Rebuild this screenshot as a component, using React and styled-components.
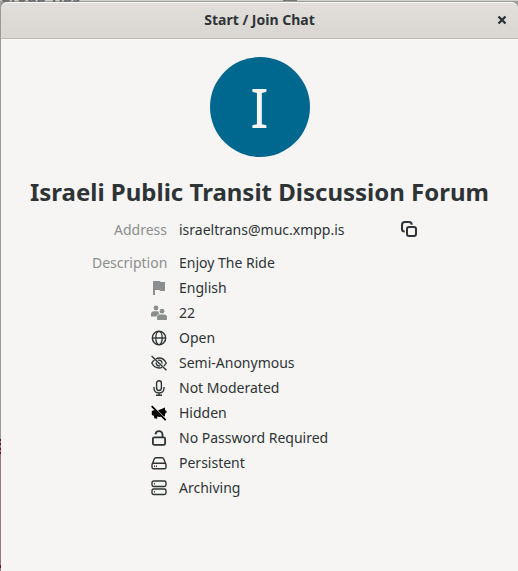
import React from "react"
import styled, { createGlobalStyle } from "styled-components"

const theme = {
  text: "#2e3436",
  dim: "#8b8e8f",
  background: "#f6f5f3",
  accent: "#00678f",
  font: '"Noto Sans", "Open Sans", sans-serif',
}

const DETAILS = [
  { name: "Language", icon: <FlagIcon />, value: "English", dim: true },
  { name: "Users", icon: <UsersIcon />, value: "22", dim: true },
  { name: "Access", icon: <GlobeIcon />, value: "Open" },
  { name: "Anonymity", icon: <EyeOffIcon />, value: "Semi-Anonymous" },
  { name: "Moderation", icon: <MicIcon />, value: "Not Moderated" },
  { name: "Visibility", icon: <HiddenIcon />, value: "Hidden" },
  { name: "Password", icon: <LockIcon />, value: "No Password Required" },
  { name: "Persistence", icon: <DriveIcon />, value: "Persistent" },
  { name: "History", icon: <ServerIcon />, value: "Archiving" },
]

export default function App() {
  return (
    <>
      <GlobalStyle />
      <Desktop>
        <BackWindow aria-hidden="true">
          <BackTitle>Group Tips</BackTitle>
          <BackMenu />
        </BackWindow>
        <Dialog role="dialog" aria-labelledby="dialog-title">
          <TitleBar>
            <DialogTitle id="dialog-title">Start / Join Chat</DialogTitle>
            <CloseButton type="button" aria-label="Close">
              <CloseIcon />
            </CloseButton>
          </TitleBar>
          <Content>
            <Avatar>I</Avatar>
            <RoomName>Israeli Public Transit Discussion Forum</RoomName>
            <Details>
              <AddressRow>
                <Label>Address</Label>
                <Value>israeltrans@muc.xmpp.is</Value>
                <Action>
                  <CopyButton type="button" aria-label="Copy address">
                    <CopyIcon />
                  </CopyButton>
                </Action>
              </AddressRow>
              <Row>
                <Label>Description</Label>
                <Value>Enjoy The Ride</Value>
              </Row>
              {DETAILS.map(({ name, icon, value, dim }) => (
                <Row key={name}>
                  <IconLabel $dim={dim} aria-label={name}>
                    {icon}
                  </IconLabel>
                  <Value>{value}</Value>
                </Row>
              ))}
            </Details>
          </Content>
        </Dialog>
      </Desktop>
    </>
  )
}

function Icon({ children }) {
  return (
    <svg
      width="16"
      height="16"
      viewBox="0 0 16 16"
      fill="none"
      stroke="currentColor"
      strokeWidth="1.4"
      aria-hidden="true"
    >
      {children}
    </svg>
  )
}

function CloseIcon() {
  return (
    <Icon>
      <path d="M4.500 4.500 11.500 11.500M11.500 4.500 4.500 11.500" strokeWidth="2.400" />
    </Icon>
  )
}

function CopyIcon() {
  return (
    <Icon>
      <g strokeWidth="2">
        <path d="M3.700 10.600C2 10.600 1 9.800 1 8V4c0-2 1-3 3-3h4c1.800 0 2.700 1 2.700 2.700" />
        <rect x="6" y="6" width="9" height="9" rx="2" />
      </g>
    </Icon>
  )
}

function FlagIcon() {
  return (
    <Icon>
      <path
        d="M2 1h6.500c.8 0 .7 1 1.500 1h4v9H9.500c-.9 0-.7-1-1.500-1H4v5H2z"
        fill="currentColor"
        stroke="none"
      />
    </Icon>
  )
}

function UsersIcon() {
  return (
    <Icon>
      <g fill="currentColor" stroke="none">
        <circle cx="5" cy="3" r="2.400" />
        <path d="M3 6.300h4.200c.2 1.300.7 2.200 1.500 2.700C7 9.300 6 10 5.500 11.500H0V9.300c0-2 1-3 3-3z" />
        <circle cx="11" cy="6.200" r="2.400" />
        <path d="M9 9.600h4c2 0 3 1.200 3 3v1.700c0 .5-.3.700-.7.700H6.700c-.4 0-.7-.2-.7-.7v-1.700c0-1.800 1-3 3-3z" />
      </g>
    </Icon>
  )
}

function GlobeIcon() {
  return (
    <Icon>
      <circle cx="8" cy="8" r="6.700" />
      <ellipse cx="8" cy="8" rx="3.200" ry="6.700" strokeWidth="1.300" />
      <path d="M1.200 8h13.600" />
    </Icon>
  )
}

function EyeOffIcon() {
  return (
    <Icon>
      <path d="M5 3.900C6 3.300 7 3 8.200 3c3 0 5.500 2 7 5-.6 1.200-1.400 2.200-2.400 3M3.500 5C2.300 5.900 1.400 6.900.8 8c1.500 3 4.200 5 7.400 5 1 0 2-.2 2.900-.6" />
      <path d="M7.200 5.200c2-.5 4.100 1 3.800 3.500M5.300 7.300c-.5 2 1 3.900 3.600 3.600" />
      <path d="M.6.9 15.400 15.300" />
    </Icon>
  )
}

function MicIcon() {
  return (
    <Icon>
      <rect x="5.600" y=".8" width="4.800" height="9.700" rx="2.400" />
      <path d="M3 7v1c0 3 2 5 5 5s5-2 5-5V7M8 13v2.200M5 15.200h6" />
    </Icon>
  )
}

function HiddenIcon() {
  return (
    <Icon>
      <g color="#000000">
        <path
          d="M.8 6 3.500 5l6.800 6.800L8 12l-1.500-.8-.5 2.600-2.700-.6-.5-2.500L.8 10zM7 5.600 14 2.400v9.200l-1.500-.5z"
          fill="currentColor"
          stroke="none"
        />
        <path d="M14.300 5.700c.8.500.8 2 0 2.500" />
        <path d="M.7 1.200 14.700 15.200" strokeWidth="1.800" />
      </g>
    </Icon>
  )
}

function LockIcon() {
  return (
    <Icon>
      <g strokeWidth="1.800">
        <rect x="1.900" y="7.300" width="12.200" height="7.600" rx="1.500" />
        <path d="M11.500 7.300V4.600c0-2-1.500-3.400-3.500-3.400-1.900 0-3.300 1.100-3.500 3.200" />
      </g>
    </Icon>
  )
}

function DriveIcon() {
  return (
    <Icon>
      <path d="M1.400 8.700 3.300 3.800c.3-.7.800-1.100 1.500-1.100h6.400c.7 0 1.200.4 1.500 1.100l1.900 4.900" />
      <rect x="1" y="8.200" width="14" height="5.600" rx="1.500" />
      <path d="M3 11.300h1M5 11.300h1" />
    </Icon>
  )
}

function ServerIcon() {
  return (
    <Icon>
      <rect x="1" y="1" width="14" height="5.500" rx="1.700" />
      <rect x="1" y="9" width="14" height="5.500" rx="1.700" />
      <path d="M3 3.800h1M3 11.800h1" />
    </Icon>
  )
}

const GlobalStyle = createGlobalStyle`
  * {
    box-sizing: border-box;
  }

  body {
    margin: 0;
    background: ${theme.background};
    color: ${theme.text};
    font-family: ${theme.font};
    font-size: 14px;
  }
`

const Desktop = styled.div`
  min-height: 100vh;
  padding: 2px 0 0 1px;
  display: flex;
  position: relative;
  background: linear-gradient(
    #9a9997 0 439px,
    #6b1030 439px 441px,
    #97777f 441px 443px,
    #6b1030 443px 445px,
    #97777f 445px 448px,
    #6b1030 448px 450px,
    #97777f 450px 452px,
    #6b1030 452px 454px,
    #97777f 454px 565px,
    #6b1030 565px 568px,
    #97777f 568px
  );
`

// The strip of the window that shows above the dialog
const BackWindow = styled.div`
  position: absolute;
  inset: 0 0 auto 0;
  height: 10px;
  display: flex;
  justify-content: space-between;
  overflow: hidden;
  background: linear-gradient(#cfcecb 0 1px, #9d9c9a 1px);
`

const BackTitle = styled.span`
  margin-top: -14px;
  font-size: 15px;
  line-height: 20px;
  font-weight: 700;
  color: #6c6d6c;
`

const BackMenu = styled.span`
  width: 14px;
  height: 1px;
  margin-right: 221px;
  background: #777776;
`

const Dialog = styled.section`
  flex: 1;
  min-width: 0;
  display: flex;
  flex-direction: column;
  position: relative;
  border-radius: 7px 7px 0 0;
  background: ${theme.background};
`

const TitleBar = styled.header`
  height: 37px;
  padding: 0 8px 2px;
  display: grid;
  grid-template-columns: 16px 1fr 16px;
  align-items: center;
  border-top: 1px solid #f8f8f7;
  border-bottom: 1px solid #bfb8b1;
  border-radius: 7px 7px 0 0;
  background: linear-gradient(#e1dedb, #dad6d2);
`

const DialogTitle = styled.h1`
  grid-column: 2;
  margin: 0;
  text-align: center;
  font-size: 14px;
  line-height: 20px;
  font-weight: 700;
`

const CloseButton = styled.button`
  width: 16px;
  height: 16px;
  padding: 0;
  display: flex;
  border: none;
  background: none;
  color: ${theme.text};
  cursor: pointer;
`

const Content = styled.main`
  padding: 18px 12px 24px;
  display: flex;
  flex-direction: column;
  align-items: center;
`

const Avatar = styled.div`
  width: 100px;
  height: 100px;
  display: flex;
  align-items: center;
  justify-content: center;
  border-radius: 50%;
  background: ${theme.accent};
  color: #f6f5f4;
  font-size: 54px;
  line-height: 100px;
`

const RoomName = styled.h2`
  margin: 18px 0 0;
  text-align: center;
  font-size: 24px;
  line-height: 34px;
  font-weight: 700;
`

const Details = styled.dl`
  width: 100%;
  max-width: 335px;
  margin: 2px 0 0;
`

const Row = styled.div`
  min-height: 25px;
  display: grid;
  grid-template-columns: 75px 1fr auto;
  column-gap: 12px;
  align-items: center;
  line-height: 25px;
`

const AddressRow = styled(Row)`
  min-height: 36px;
  margin-bottom: 3px;
`

const Label = styled.dt`
  text-align: right;
  color: ${theme.dim};
`

const IconLabel = styled(Label)`
  display: flex;
  justify-content: flex-end;
  color: ${({ $dim }) => ($dim ? theme.dim : theme.text)};
`

const Value = styled.dd`
  margin: 0;
  white-space: nowrap;
`

const Action = styled.dd`
  margin: 0;
`

const CopyButton = styled.button`
  width: 36px;
  height: 36px;
  padding: 0;
  display: flex;
  align-items: center;
  justify-content: center;
  border: none;
  background: none;
  color: ${theme.text};
  cursor: pointer;
`
